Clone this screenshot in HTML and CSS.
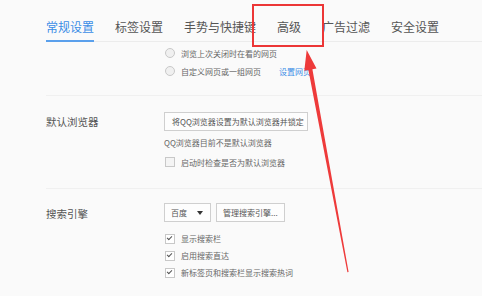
FILE: index.html
```html
<!DOCTYPE html>
<html lang="zh-CN">
<head>
    <meta charset="UTF-8">
    <title>设置</title>
    <link rel="stylesheet" href="styles.css">
</head>
<body>
    <div class="page">
        <div class="tabs">
            <div class="tab active">常规设置</div>
            <div class="tab">标签设置</div>
            <div class="tab">手势与快捷键</div>
            <div class="tab">高级</div>
            <div class="tab">广告过滤</div>
            <div class="tab">安全设置</div>
        </div>

        <div class="section startup">
            <div class="label"></div>
            <div class="content">
                <div class="row"><span class="radio"></span>浏览上次关闭时在看的网页</div>
                <div class="row"><span class="radio"></span>自定义网页或一组网页<a class="link">设置网页</a></div>
            </div>
        </div>

        <div class="section browser">
            <div class="label">默认浏览器</div>
            <div class="content">
                <div class="btn wide">将QQ浏览器设置为默认浏览器并锁定</div>
                <div class="note">QQ浏览器目前不是默认浏览器</div>
                <div class="row"><span class="check"></span>启动时检查是否为默认浏览器</div>
            </div>
        </div>

        <div class="section search">
            <div class="label">搜索引擎</div>
            <div class="content">
                <div class="controls">
                    <div class="select">百度<span class="caret"></span></div>
                    <div class="btn">管理搜索引擎...</div>
                </div>
                <div class="row"><span class="check on"></span>显示搜索栏</div>
                <div class="row"><span class="check on"></span>启用搜索直达</div>
                <div class="row"><span class="check on"></span>新标签页和搜索栏显示搜索热词</div>
            </div>
        </div>
    </div>

    <!-- annotation drawn over the screenshot -->
    <svg class="mark" width="482" height="296" viewBox="0 0 482 296">
        <rect x="253" y="5" width="70" height="41" fill="none" stroke="#ec3636" stroke-width="2"/>
        <polygon fill="#ee3a3a" points="306.7,50 316.5,68.6 312.4,69.3 348.6,272 347.4,272.2 308.4,70.1 304.3,70.8"/>
    </svg>
</body>
</html>
```

FILE: styles.css
```css
body {
    margin: 0;
    background-color: #fafafa;
    font-family: "Noto Sans CJK SC", "Liberation Sans", sans-serif;
    color: #555;
    width: 482px;
    height: 296px;
    overflow: hidden;
    position: relative;
}
.page {
    margin-left: 46px;
}
.tabs {
    display: flex;
    gap: 21px;
    height: 41px;
    border-bottom: 1px solid #ececec;
}
.tab {
    font-size: 12px;
    line-height: 14px;
    padding-top: 20px;
    height: 21px;
    color: #555;
}
.tab.active {
    color: #3b8de6;
    border-bottom: 2px solid #5aa0ec;
    height: 20px;
}
.section {
    display: flex;
    border-bottom: 1px solid #f0f0f0;
}
.label {
    width: 118px;
    flex: none;
    font-size: 10.5px;
    line-height: 14px;
    color: #555;
}
.content {
    display: flex;
    flex-direction: column;
    align-items: flex-start;
    font-size: 8px;
    color: #666;
    white-space: nowrap;
}
.row {
    display: flex;
    align-items: center;
    height: 18px;
}
.startup {
    height: 52px;
    padding-top: 1px;
}
.startup .content {
    padding-top: 1px;
}
.radio {
    width: 8px;
    height: 8px;
    border: 1px solid #c8c8c8;
    border-radius: 50%;
    background: #f0f0f0;
    margin: 0 6px 0 1px;
}
.link {
    color: #3b8de6;
    margin-left: 18px;
}
.browser {
    height: 76px;
    padding-top: 16px;
}
.browser .label {
    padding-top: 3px;
}
.btn {
    box-sizing: border-box;
    height: 19px;
    border: 1px solid #cfcfcf;
    background: #fdfdfd;
    padding: 0 6px;
    line-height: 17px;
    color: #555;
    white-space: nowrap;
}
.btn.wide {
    width: 144px;
    padding: 0 4px 0 7px;
    overflow: hidden;
}
.note {
    margin-top: 6px;
    line-height: 12px;
}
.browser .row {
    margin-top: 4px;
}
.check {
    box-sizing: border-box;
    width: 10px;
    height: 10px;
    border: 1px solid #c8c8c8;
    background: #f4f4f4;
    margin: 0 6px 0 1px;
    position: relative;
}
.check.on {
    background: #fff;
}
.check.on::after {
    content: "";
    position: absolute;
    left: 2px;
    top: 0px;
    width: 2px;
    height: 4px;
    border: solid #555;
    border-width: 0 1.5px 1.5px 0;
    transform: rotate(45deg);
}
.search {
    padding-top: 14px;
    border-bottom: none;
}
.search .label {
    padding-top: 4px;
}
.controls {
    display: flex;
    gap: 5px;
    margin-bottom: 8px;
}
.select {
    box-sizing: border-box;
    width: 47px;
    height: 19px;
    border: 1px solid #cfcfcf;
    background: #fdfdfd;
    padding-left: 6px;
    line-height: 17px;
    color: #555;
    position: relative;
}
.caret {
    position: absolute;
    right: 7px;
    top: 7px;
    border-left: 3px solid transparent;
    border-right: 3px solid transparent;
    border-top: 4px solid #333;
}
.search .row {
    height: 17px;
}
.mark {
    position: absolute;
    left: 0;
    top: 0;
}
```
